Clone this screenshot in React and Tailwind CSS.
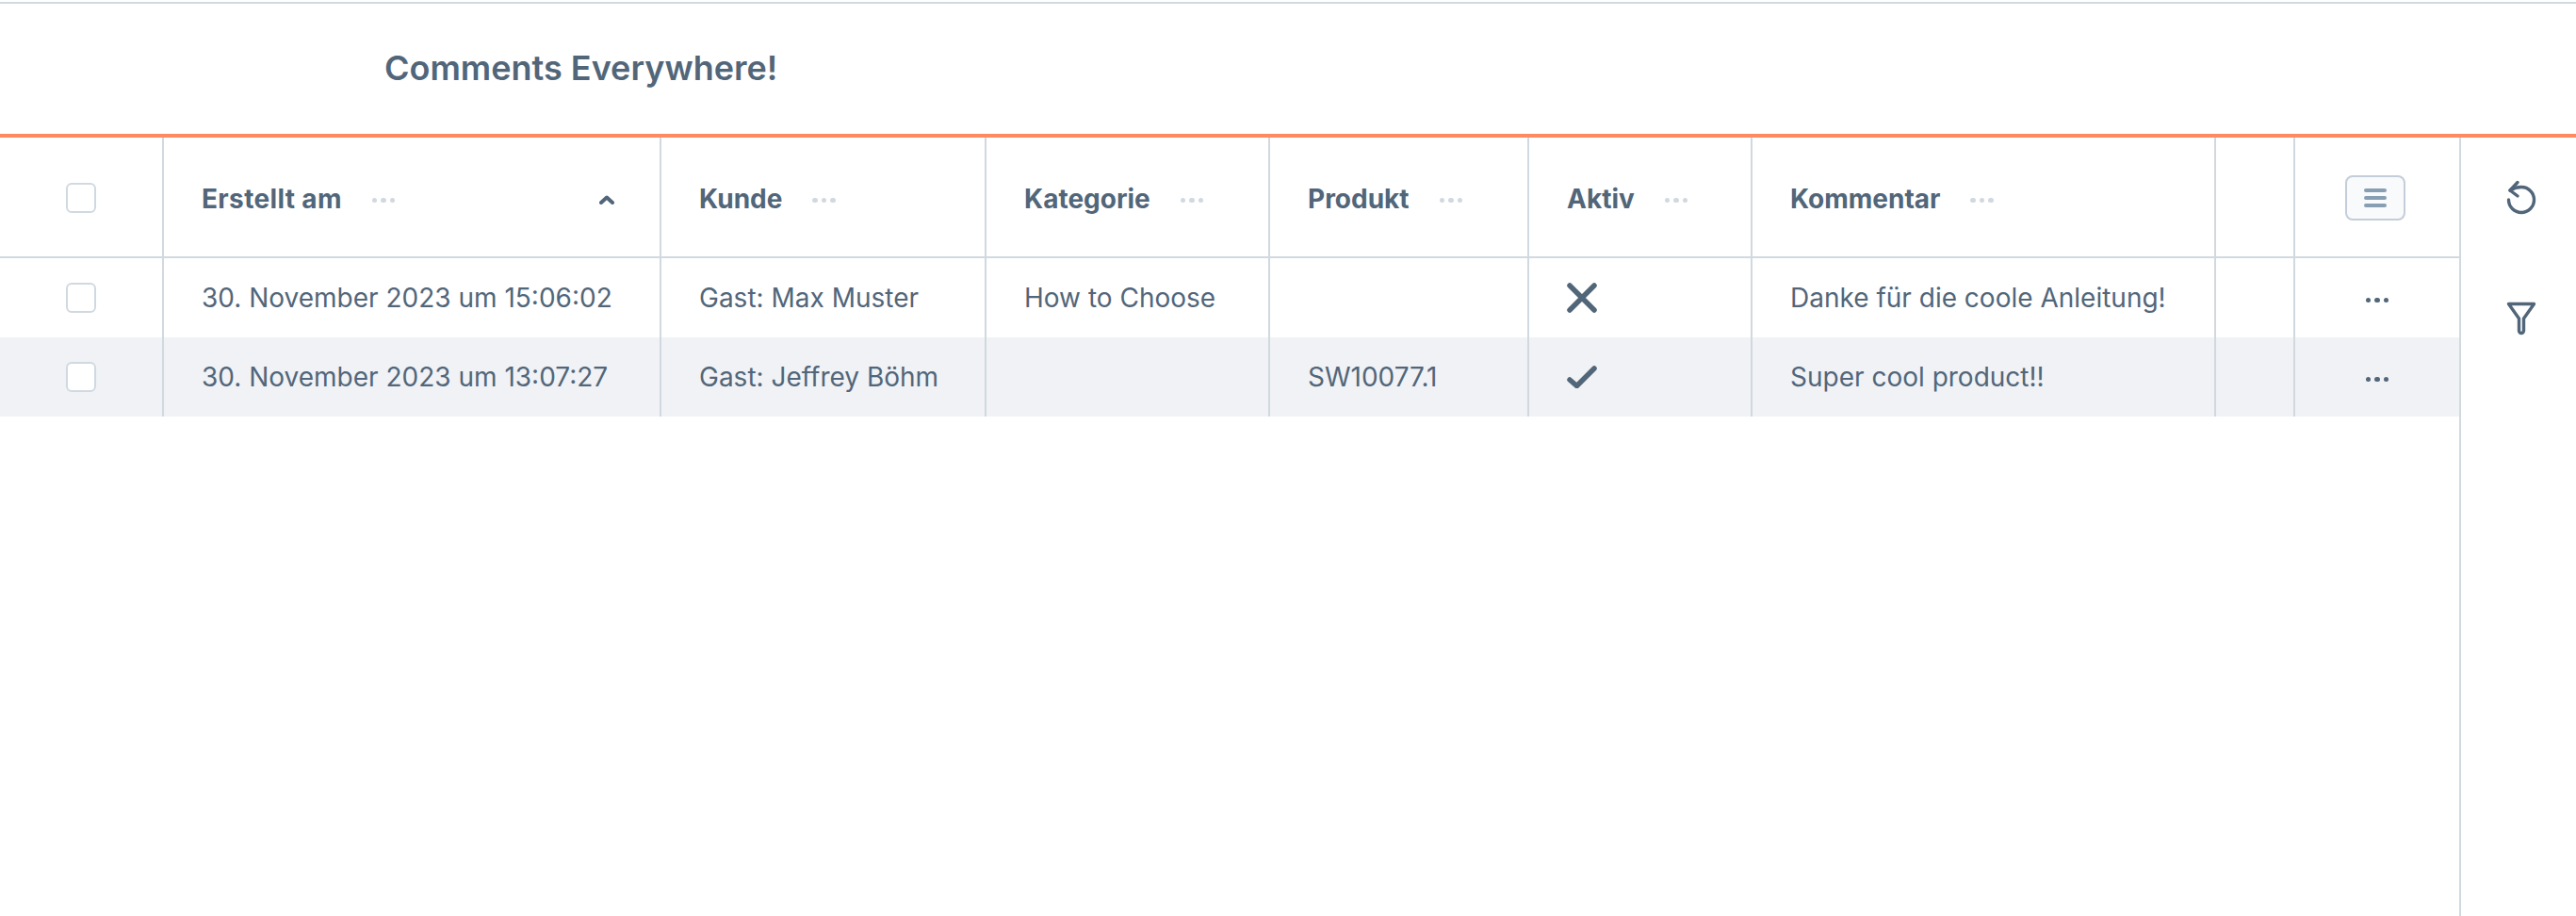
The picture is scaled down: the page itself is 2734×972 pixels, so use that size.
const columns = [
  { label: "Erstellt am", width: "w-[528px]", sorted: true, labelClass: "tracking-[0.35px]" },
  { label: "Kunde", width: "w-[345px]", labelClass: "" },
  { label: "Kategorie", width: "w-[301px]", labelClass: "" },
  { label: "Produkt", width: "w-[275px]", labelClass: "" },
  { label: "Aktiv", width: "w-[237px]", labelClass: "" },
  { label: "Kommentar", width: "w-[492px]", labelClass: "" },
];

const rows = [
  {
    date: "30. November 2023 um 15:06:02",
    customer: "Gast: Max Muster",
    category: "How to Choose",
    product: "",
    active: false,
    comment: "Danke für die coole Anleitung!",
  },
  {
    date: "30. November 2023 um 13:07:27",
    customer: "Gast: Jeffrey Böhm",
    category: "",
    product: "SW10077.1",
    active: true,
    comment: "Super cool product!!",
  },
];

function Dots({ color }) {
  return (
    <span className="flex items-center gap-[4px]">
      <span className={`h-[5.5px] w-[5.5px] rounded-full ${color}`}></span>
      <span className={`h-[5.5px] w-[5.5px] rounded-full ${color}`}></span>
      <span className={`h-[5.5px] w-[5.5px] rounded-full ${color}`}></span>
    </span>
  );
}

function Checkbox() {
  return (
    <span className="block h-8 w-8 rounded-[6px] border-2 border-[#d1d9e0] bg-white"></span>
  );
}

function Cell({ width, children }) {
  return (
    <div
      className={`flex shrink-0 items-center border-r-2 border-[#d1d9e0] pl-[40px] ${width}`}
    >
      {children}
    </div>
  );
}

function ActiveIcon({ active }) {
  if (active) {
    return (
      <svg width="32" height="24" viewBox="0 0 32 24" fill="none" stroke="#52667a" strokeWidth="5.5" strokeLinecap="round" strokeLinejoin="round">
        <path d="M3 15l7.5 6.5L29 3" />
      </svg>
    );
  }
  return (
    <svg width="32" height="32" viewBox="0 0 32 32" fill="none" stroke="#52667a" strokeWidth="5.5" strokeLinecap="round">
      <path d="M3 3l26 26M29 3L3 29" />
    </svg>
  );
}

export default function App() {
  return (
    <div className="flex h-[972px] w-[2734px] flex-col overflow-hidden bg-white font-['Inter',sans-serif] text-[28px] text-[#52667a]">
      <div className="mt-[2px] h-[2px] bg-[#d1d9e0]"></div>
      <div className="flex h-[138px] items-center pb-[3px] pl-[408px]">
        <h1 className="text-[36px] font-semibold">Comments Everywhere!</h1>
      </div>
      <div className="h-[4px] bg-[#fd8a60]"></div>

      <div className="flex flex-1">
        <div className="w-[2610px]">
          <div className="flex h-[128px] border-b-2 border-[#d1d9e0]">
            <div className="flex w-[174px] shrink-0 items-center justify-center border-r-2 border-[#d1d9e0] pt-[2px]">
              <Checkbox />
            </div>
            {columns.map((col) => (
              <Cell key={col.label} width={col.width}>
                <span className={`mt-[3px] font-bold ${col.labelClass}`}>{col.label}</span>
                <span className="ml-[32px] mt-[7px]">
                  <Dots color="bg-[#d1d9e0]" />
                </span>
                {col.sorted && (
                  <svg
                    className="ml-auto mr-[48px] mt-[6px]"
                    width="16"
                    height="10"
                    viewBox="0 0 16 10"
                    fill="none"
                    stroke="#52667a"
                    strokeWidth="4"
                    strokeLinecap="round"
                    strokeLinejoin="round"
                  >
                    <path d="M2 8l6-5.5L14 8" />
                  </svg>
                )}
              </Cell>
            ))}
            <div className="w-[84px] shrink-0 border-r-2 border-[#d1d9e0]"></div>
            <div className="flex w-[174px] shrink-0 items-center justify-center pr-[4px] pt-[2px]">
              <div className="flex h-[48px] w-[64px] flex-col items-center justify-center gap-[4px] rounded-[8px] border-2 border-[#c4ced9] bg-[#f9fafb]">
                <span className="h-[4px] w-[24px] rounded-full bg-[#889fb3]"></span>
                <span className="h-[4px] w-[24px] rounded-full bg-[#889fb3]"></span>
                <span className="h-[4px] w-[24px] rounded-full bg-[#889fb3]"></span>
              </div>
            </div>
          </div>

          {rows.map((row, i) => (
            <div
              key={row.date}
              className={`flex h-[84px] ${i % 2 === 1 ? "bg-[#f0f2f5]" : "bg-white"}`}
            >
              <div className="flex w-[174px] shrink-0 items-center justify-center border-r-2 border-[#d1d9e0]">
                <Checkbox />
              </div>
              <Cell width="w-[528px]">{row.date}</Cell>
              <Cell width="w-[345px]">{row.customer}</Cell>
              <Cell width="w-[301px]">{row.category}</Cell>
              <Cell width="w-[275px]">{row.product}</Cell>
              <Cell width="w-[237px]">
                <ActiveIcon active={row.active} />
              </Cell>
              <Cell width="w-[492px]">{row.comment}</Cell>
              <div className="w-[84px] shrink-0 border-r-2 border-[#d1d9e0]"></div>
              <div className="flex w-[174px] shrink-0 items-center justify-center pt-[5px]">
                <Dots color="bg-[#52667a]" />
              </div>
            </div>
          ))}
        </div>

        <div className="w-[124px] border-l-2 border-[#d1d9e0] pl-[48px] pt-[44px]">
          <svg width="32" height="38" viewBox="0 0 32 38" fill="none" stroke="#52667a" strokeWidth="3.4" strokeLinecap="round" strokeLinejoin="round">
            <path d="M2.5 22A13.5 13.5 0 1 0 16 8.5C12 8.5 8 9.5 4 12" />
            <path d="M12 3.5L4 12l8 6" />
          </svg>
          <svg className="mt-[92px]" width="32" height="36" viewBox="0 0 32 36" fill="none" stroke="#52667a" strokeWidth="3.4" strokeLinecap="round" strokeLinejoin="round">
            <path d="M2.5 2.5h27L18.5 18v13a2.5 2.5 0 0 1-5 0V18z" />
          </svg>
        </div>
      </div>
    </div>
  );
}
